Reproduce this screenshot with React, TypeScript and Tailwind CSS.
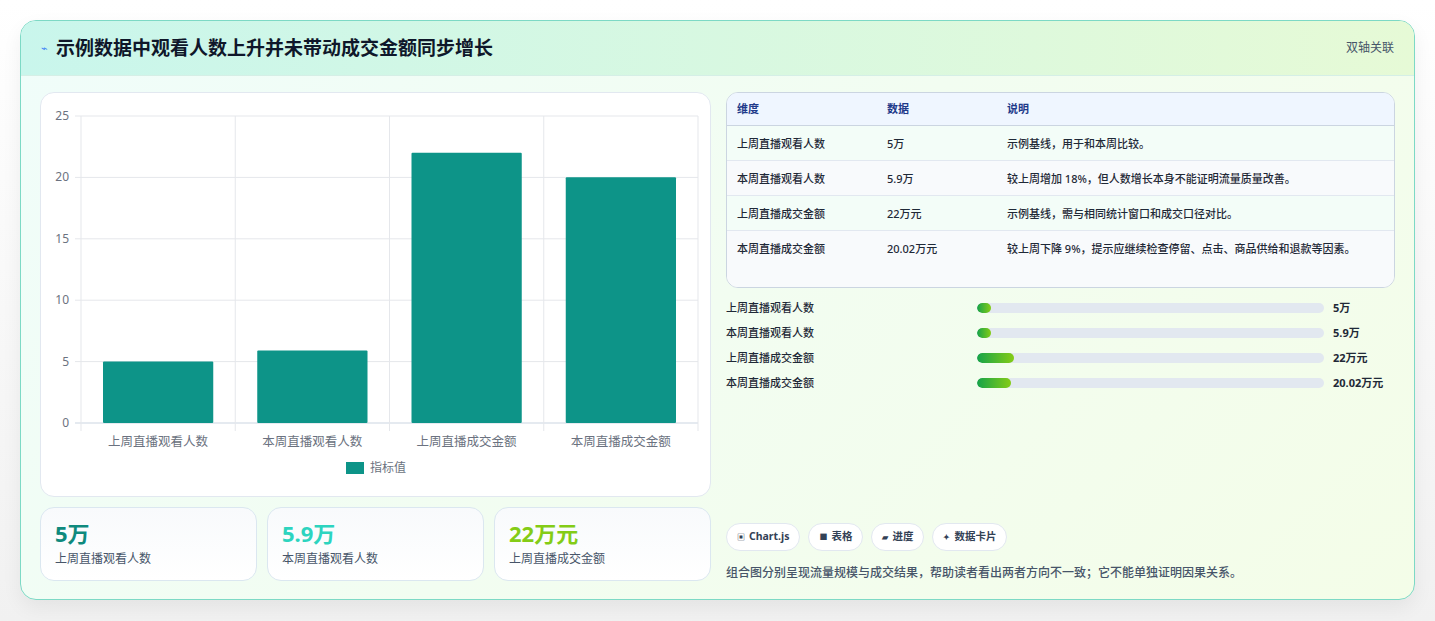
import React from "react";

const F = { fontFamily: '"Noto Sans", "Noto Sans CJK SC", sans-serif' };
const rows = [
  ["上周直播观看人数", "5万", "示例基线，用于和本周比较。"],
  ["本周直播观看人数", "5.9万", "较上周增加 18%，但人数增长本身不能证明流量质量改善。"],
  ["上周直播成交金额", "22万元", "示例基线，需与相同统计窗口和成交口径对比。"],
  ["本周直播成交金额", "20.02万元", "较上周下降 9%，提示应继续检查停留、点击、商品供给和退款等因素。"],
];
const bars = [["上周直播观看人数", 14, "5万"], ["本周直播观看人数", 14, "5.9万"], ["上周直播成交金额", 37, "22万元"], ["本周直播成交金额", 34, "20.02万元"]] as const;

function Chart() {
  const x0 = 40, x1 = 657, y0 = 23, y1 = 330;
  const sc = (y1 - y0) / 25;
  const vals = [5, 5.9, 22, 20.02];
  const labels = ["上周直播观看人数", "本周直播观看人数", "上周直播成交金额", "本周直播成交金额"];
  const cw = (x1 - x0) / 4;
  return (
    <svg width="670" height="404" style={F}>
      {[0, 5, 10, 15, 20, 25].map((t) => (
        <g key={t}>
          <line x1={x0 - 6} x2={x1} y1={y1 - t * sc} y2={y1 - t * sc} stroke={t === 0 ? "#cbd5e1" : "#e5e7eb"} />
          <text x={x0 - 12} y={y1 - t * sc + 4} textAnchor="end" fontSize="12" fill="#6b7280">{t}</text>
        </g>
      ))}
      {[0, 1, 2, 3, 4].map((i) => (
        <line key={i} x1={x0 + i * cw} x2={x0 + i * cw} y1={y0} y2={y1 + 8} stroke="#e5e7eb" />
      ))}
      {vals.map((v, i) => (
        <g key={i}>
          <rect x={x0 + i * cw + 22} y={y1 - v * sc} width={cw - 44} height={v * sc} fill="#0d9488" rx="1" />
          <text x={x0 + i * cw + cw / 2} y={y1 + 23} textAnchor="middle" fontSize="12.5" fill="#6b7280">{labels[i]}</text>
        </g>
      ))}
      <rect x="305" y="369" width="18" height="12" fill="#0d9488" />
      <text x="329" y="379" fontSize="12" fill="#6b7280">指标值</text>
    </svg>
  );
}

export default function App() {
  return (
    <div className="w-[1435px] h-[621px] bg-[linear-gradient(#ffffff,#f1f1f1)] pt-[20px] px-[20px]" style={F}>
      <div className="h-[580px] rounded-[16px] border border-[#7dd9c5] overflow-hidden bg-[linear-gradient(135deg,#f0fdfa,#f4fde8)] shadow-[0_8px_20px_rgba(0,0,0,0.06)]">
        <div className="h-[55px] flex items-center justify-between px-[20px] bg-[linear-gradient(90deg,#c9f6ec,#e6fad6)] border-b border-[#d5efe6]">
          <div className="flex items-center gap-[8px]">
            <span className="text-[11px] text-[#3b82f6]">⌁</span>
            <span className="text-[19px] font-bold text-[#0f172a]">示例数据中观看人数上升并未带动成交金额同步增长</span>
          </div>
          <span className="text-[12px] text-[#475569]">双轴关联</span>
        </div>
        <div className="flex gap-[15px] px-[19px] pt-[16px]">
          <div className="w-[671px] flex flex-col gap-[10px]">
            <div className="h-[405px] bg-white rounded-[14px] border border-[#e2e8f0]"><Chart /></div>
            <div className="flex gap-[10px]">
              {[["5万", "text-[#0f8a7e]", "上周直播观看人数"], ["5.9万", "text-[#2dd4bf]", "本周直播观看人数"], ["22万元", "text-[#84cc16]", "上周直播成交金额"]].map(([v, c, l]) => (
                <div key={l} className="flex-1 h-[74px] rounded-[14px] border border-[#dbe7f0] bg-[linear-gradient(#f8fafc,#ffffff)] px-[14px] pt-[10px]">
                  <div className={`text-[22px] font-bold leading-[30px] ${c}`}>{v}</div>
                  <div className="text-[12px] text-[#475569] mt-[2px]">{l}</div>
                </div>
              ))}
            </div>
          </div>
          <div className="w-[670px] flex flex-col">
            <div className="rounded-[12px] border border-[#cbd5e1] overflow-hidden bg-white">
              <div className="flex h-[33px] items-center bg-[#eff6ff] border-b border-[#cbd5e1] text-[11px] font-bold text-[#1e3a8a]">
                <div className="w-[160px] pl-[10px]">维度</div><div className="w-[120px]">数据</div><div>说明</div>
              </div>
              {rows.map((r, i) => (
                <div key={i} className={`flex text-[11px] font-medium text-[#1f2937] pt-[10px] ${i === 3 ? "h-[56px]" : "h-[35px]"} ${i % 2 ? "bg-[#f8fafc]" : "bg-[#f3fdf8]"} ${i < 3 ? "border-b border-[#e2e8f0]" : ""}`}>
                  <div className="w-[160px] pl-[10px] shrink-0">{r[0]}</div><div className="w-[120px] shrink-0">{r[1]}</div><div className="w-[370px] leading-[17px] -mt-[1px]">{r[2]}</div>
                </div>
              ))}
            </div>
            <div className="flex flex-col gap-[7px] mt-[11px]">
              {bars.map(([l, w, v]) => (
                <div key={l} className="flex items-center h-[18px] text-[11px] font-medium text-[#1f2937]">
                  <div className="w-[251px]">{l}</div>
                  <div className="w-[347px] h-[10px] rounded-full bg-[#e2e8f0] overflow-hidden">
                    <div className="h-full rounded-full bg-[linear-gradient(90deg,#16a34a,#84cc16)]" style={{ width: w }} />
                  </div>
                  <div className="ml-[9px] font-bold">{v}</div>
                </div>
              ))}
            </div>
            <div className="flex gap-[8px] mt-[131px]">
              {[["▣", "Chart.js"], ["■", "表格"], ["▰", "进度"], ["✦", "数据卡片"]].map(([i, t]) => (
                <div key={t} className="h-[28px] px-[10px] rounded-full border border-[#e2e8f0] bg-white flex items-center gap-[4px] text-[10.5px] font-bold text-[#334155]">
                  <span className="text-[8px]">{i}</span>{t}
                </div>
              ))}
            </div>
            <div className="mt-[13px] text-[12px] text-[#475569] font-medium">组合图分别呈现流量规模与成交结果，帮助读者看出两者方向不一致；它不能单独证明因果关系。</div>
          </div>
        </div>
      </div>
    </div>
  );
}
